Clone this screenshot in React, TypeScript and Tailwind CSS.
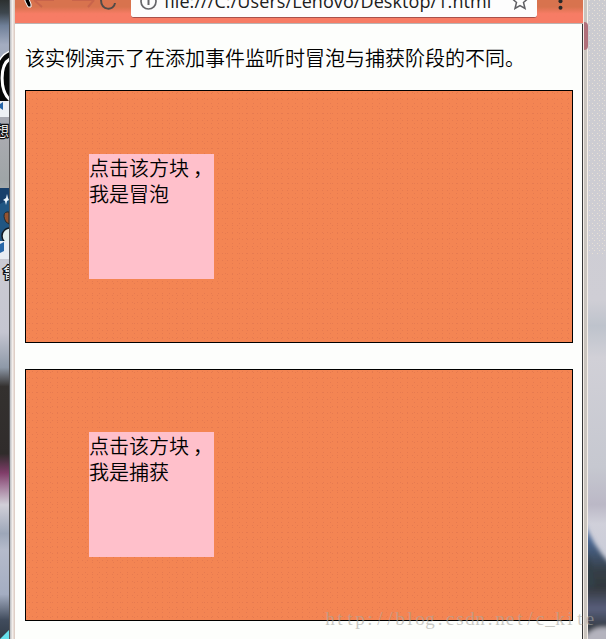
import React from "react";

function LeftDesktop() {
  return (
    <svg className="block h-[639px] w-[9px] shrink-0" viewBox="0 0 9 639" preserveAspectRatio="none">
      <defs>
        <linearGradient id="leftSky" x1="0" y1="0" x2="0" y2="1">
          <stop offset="0" stopColor="#2c3030" />
          <stop offset="0.02" stopColor="#3d464d" />
          <stop offset="0.04" stopColor="#6f7f98" />
          <stop offset="0.07" stopColor="#a3acc0" />
          <stop offset="0.22" stopColor="#a9aaaf" />
          <stop offset="0.28" stopColor="#9fa5a7" />
          <stop offset="0.41" stopColor="#cbcbd3" />
          <stop offset="0.52" stopColor="#c5c6d1" />
          <stop offset="0.575" stopColor="#8e99a8" />
          <stop offset="0.605" stopColor="#34312f" />
          <stop offset="0.71" stopColor="#302c2b" />
          <stop offset="0.74" stopColor="#803d69" />
          <stop offset="0.76" stopColor="#a37899" />
          <stop offset="0.79" stopColor="#d1cfd8" />
          <stop offset="0.835" stopColor="#9da7b9" />
          <stop offset="0.86" stopColor="#b5bbcb" />
          <stop offset="0.93" stopColor="#a4adc2" />
          <stop offset="0.97" stopColor="#414c5d" />
          <stop offset="1" stopColor="#313b47" />
        </linearGradient>
      </defs>
      <rect width="9" height="639" fill="url(#leftSky)" />
      <path d="M9 51Q3 54 0 60V102H9Z" fill="#070808" />
      <path d="M9 51.5Q3 54 -1 61" stroke="#fff" strokeWidth="1.5" fill="none" />
      <path d="M10 59C0 64 -1 90 10 100" stroke="#fff" strokeWidth="3" fill="none" />
      <path d="M0 101H9V117H0Z" fill="#edf1f5" />
      <path d="M0 104L3 102V110L0 108Z" fill="#2867a8" />
      <text x="-5" y="136" fontFamily="Noto Sans CJK SC, sans-serif" fontSize="14" fill="#fff" stroke="#111" strokeWidth="2.5" paintOrder="stroke">想</text>
      <path d="M0 188H9V246H0Z" fill="#205683" />
      <path d="M0 188H9V199L0 204Z" fill="#173f6b" />
      <path d="M7 194L8 198 9 200 7 201 6 205 5 201 3 200 6 198Z" fill="#eef8ff" />
      <path d="M9 212C3 211 3 217 6 222L9 224Z" fill="#955330" stroke="#222c32" />
      <circle cx="10" cy="236" r="8" fill="#e4f0ef" stroke="#101820" strokeWidth="1.5" />
      <path d="M0 241H9V259H0Z" fill="#e9edf2" />
      <path d="M0 244L4 242V251L0 253Z" fill="#2867a8" />
      <text x="3" y="278" fontFamily="Noto Sans CJK SC, sans-serif" fontSize="15" fill="#fff" stroke="#10151b" strokeWidth="2.5" paintOrder="stroke">鲁</text>
      <path d="M0 639L9 630V639Z" fill="#67e1ed" />
    </svg>
  );
}

function RightDesktop() {
  return (
    <svg className="block h-[639px] w-[18px] shrink-0" viewBox="0 0 18 639" preserveAspectRatio="none">
      <defs>
        <linearGradient id="rightSky" x1="0" y1="0" x2="0" y2="1">
          <stop offset="0" stopColor="#cbcbd0" />
          <stop offset="0.47" stopColor="#cfced5" />
          <stop offset="0.51" stopColor="#bec3cc" />
          <stop offset="0.56" stopColor="#d1d0d7" />
          <stop offset="0.73" stopColor="#c6c8d0" />
          <stop offset="0.79" stopColor="#bbb8c6" />
          <stop offset="0.82" stopColor="#d0d0da" />
          <stop offset="1" stopColor="#bcc3d3" />
        </linearGradient>
        <linearGradient id="mountain" x1="0" y1="0" x2="0" y2="1">
          <stop offset="0" stopColor="#6f8fc4" />
          <stop offset="0.2" stopColor="#4a6690" />
          <stop offset="0.42" stopColor="#363f48" />
          <stop offset="0.55" stopColor="#32383d" />
          <stop offset="0.72" stopColor="#595f7c" />
          <stop offset="0.87" stopColor="#343b43" />
          <stop offset="1" stopColor="#a0a0ac" />
        </linearGradient>
        <filter id="haze" x="-50%" y="-10%" width="200%" height="120%">
          <feGaussianBlur stdDeviation="2" />
        </filter>
        <pattern id="desktopGrain" width="5" height="5" patternUnits="userSpaceOnUse">
          <path d="M1 0h1v1H1zM4 3h1v1H4z" fill="#e8e1d5" />
        </pattern>
      </defs>
      <rect width="18" height="639" fill="url(#rightSky)" />
      <rect width="18" height="255" fill="url(#desktopGrain)" />
      <g filter="url(#haze)">
        <path d="M-6 516Q4 546 24 566V645H-6Z" fill="url(#mountain)" />
        <path d="M0 552Q5 570 7 584L0 592Z" fill="#31404a" />
        <path d="M-4 640Q4 624 22 628V645H-4Z" fill="#b4b3bd" />
      </g>
    </svg>
  );
}

function Toolbar() {
  return (
    <header className="flex h-6 overflow-hidden border-b border-[#bbb4b2] bg-linear-to-b from-[#d8734e] from-30% to-[#f77c65] to-60%">
      <svg className="h-[23px] w-[116px] shrink-0" viewBox="15 0 116 23" fill="none">
        <path d="M34 0L42 7M36 0H54M72 0H94M94 0L88 7" stroke="#c9644b" strokeWidth="2" />
        <path d="M25 -1V1L28 7H31V4L29 -1" fill="#000" stroke="#fff" strokeWidth="1" />
        <path d="M101 0C101 11 114 11 115 3" stroke="#514b48" strokeWidth="2" />
      </svg>
      <div className="flex h-[18px] w-[406px] shrink-0 rounded-b-[3px] border-b border-[#a9514a] bg-[#fdfdfd]">
        <svg className="h-4 w-[33px] shrink-0" viewBox="0 0 33 16" fill="none">
          <circle cx="17.5" cy="1.5" r="7.5" stroke="#66666a" strokeWidth="1.7" />
          <path d="M17.5 0V5" stroke="#66666a" strokeWidth="2" />
        </svg>
        <div className="-mt-[11px] h-[27px] w-[346px] shrink-0 whitespace-nowrap font-['Open_Sans',sans-serif] text-[18px] font-normal leading-6 tracking-[0.08px] text-[#202020]">
          file:///C:/Users/Lenovo/Desktop/1.html
        </div>
        <svg className="h-4 w-[27px]" viewBox="510 0 27 16" fill="none">
          <path d="M520 -8L522.3 -1.5H528L523.5 2.5L525 8.5L520 5.5L515 8.5L516.5 2.5L512 -1.5H517.7Z" stroke="#606064" strokeWidth="1.5" />
        </svg>
      </div>
      <svg className="h-[23px] w-[46px] shrink-0" viewBox="537 0 46 23" fill="#292929">
        <circle cx="560.5" cy="1.3" r="2" />
        <circle cx="560.5" cy="7.8" r="2" />
      </svg>
    </header>
  );
}

function DemoBox({ label, first = false }: { label: string; first?: boolean }) {
  return (
    <section className={first
      ? "h-[253px] w-[548px] border border-black bg-[#f48553] bg-[radial-gradient(circle_at_1.5px_1.5px,#e67a50_0.6px,transparent_0.8px),radial-gradient(circle_at_3.5px_2.5px,#e67a50_0.6px,transparent_0.8px)] bg-size-[5px_7px,7px_5px] px-[63px] pt-[63px]"
      : "mt-[26px] h-[252px] w-[548px] border border-black bg-[#f48553] bg-[radial-gradient(circle_at_1.5px_1.5px,#e67a50_0.6px,transparent_0.8px),radial-gradient(circle_at_3.5px_2.5px,#e67a50_0.6px,transparent_0.8px)] bg-size-[5px_7px,7px_5px] px-[63px] pt-[62px]"}>
      <div className="size-[125px] bg-[#ffc0cb] pt-px text-[20px] leading-[26px] text-black">
        <div className="whitespace-nowrap">点击该方块<span className="ml-[4px]">，</span></div>
        <div>{label}</div>
      </div>
    </section>
  );
}

function Watermark() {
  return (
    <div className="absolute left-[325px] top-[607px] flex font-['Liberation_Serif',serif] text-[19px] leading-6 text-[#aaa7a0]/60">
      {Array.from("http://blog.csdn.net/c_kite").map((character, index) => (
        <span key={index} className="w-[10px] text-center">{character}</span>
      ))}
    </div>
  );
}

export default function App() {
  return (
    <div className="relative flex h-[639px] w-[606px] overflow-hidden bg-[#cacbd2] font-['Noto_Sans_CJK_SC',sans-serif] font-[350]">
      <LeftDesktop />
      <div className="h-full w-1.5 shrink-0 border-l border-[#555659] bg-linear-to-r from-[#b9bcc0] via-[#f3eeeb] to-[#dac7bd]" />
      <main className="h-full w-[568px] shrink-0 bg-[#fdfefc]">
        <Toolbar />
        <div className="h-[615px] border-r border-[#353536] pl-[10px]">
          <p className="h-[66px] pt-[20px] text-[20px] leading-[28px] text-black">该实例演示了在添加事件监听时冒泡与捕获阶段的不同。</p>
          <DemoBox label="我是冒泡" first />
          <DemoBox label="我是捕获" />
        </div>
      </main>
      <div className="h-full w-[5px] shrink-0 border-x border-[#f4eee8] bg-[#c9c4be] pt-[22px]">
        <div className="h-[28px] w-[4px] rounded-r-full bg-[#b0707a]" />
      </div>
      <RightDesktop />
      <Watermark />
    </div>
  );
}
